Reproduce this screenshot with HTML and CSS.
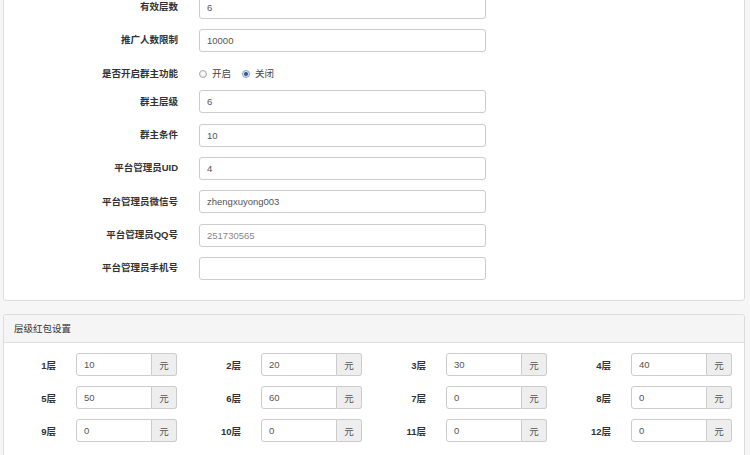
FILE: index.html
```html
<!DOCTYPE html>
<html lang="zh-CN">
<head>
<meta charset="utf-8">
<title>设置</title>
<link rel="stylesheet" href="styles.css">
</head>
<body>
<div class="page">
  <div class="panel panel-top">
    <div class="panel-body">
      <div class="form-row"><label class="lbl">有效层数</label><input class="field" type="text" value="6"></div>
      <div class="form-row"><label class="lbl">推广人数限制</label><input class="field" type="text" value="10000"></div>
      <div class="form-row radio-row">
        <label class="lbl">是否开启群主功能</label>
        <div class="radios">
          <label class="radio-inline"><input type="radio" name="qz"><span>开启</span></label>
          <label class="radio-inline"><input type="radio" name="qz" checked><span>关闭</span></label>
        </div>
      </div>
      <div class="form-row"><label class="lbl">群主层级</label><input class="field" type="text" value="6"></div>
      <div class="form-row"><label class="lbl">群主条件</label><input class="field" type="text" value="10"></div>
      <div class="form-row"><label class="lbl">平台管理员UID</label><input class="field" type="text" value="4"></div>
      <div class="form-row"><label class="lbl">平台管理员微信号</label><input class="field" type="text" value="zhengxuyong003"></div>
      <div class="form-row"><label class="lbl">平台管理员QQ号</label><input class="field light" type="text" value="251730565"></div>
      <div class="form-row"><label class="lbl">平台管理员手机号</label><input class="field" type="text" value=""></div>
    </div>
  </div>

  <div class="panel">
    <div class="panel-heading">层级红包设置</div>
    <div class="panel-body grid">
      <div class="cell"><label class="lbl-s">1层</label><div class="igroup"><input type="text" value="10"><span class="addon">元</span></div></div>
      <div class="cell"><label class="lbl-s">2层</label><div class="igroup"><input type="text" value="20"><span class="addon">元</span></div></div>
      <div class="cell"><label class="lbl-s">3层</label><div class="igroup"><input type="text" value="30"><span class="addon">元</span></div></div>
      <div class="cell"><label class="lbl-s">4层</label><div class="igroup"><input type="text" value="40"><span class="addon">元</span></div></div>
      <div class="cell"><label class="lbl-s">5层</label><div class="igroup"><input type="text" value="50"><span class="addon">元</span></div></div>
      <div class="cell"><label class="lbl-s">6层</label><div class="igroup"><input type="text" value="60"><span class="addon">元</span></div></div>
      <div class="cell"><label class="lbl-s">7层</label><div class="igroup"><input type="text" value="0"><span class="addon">元</span></div></div>
      <div class="cell"><label class="lbl-s">8层</label><div class="igroup"><input type="text" value="0"><span class="addon">元</span></div></div>
      <div class="cell"><label class="lbl-s">9层</label><div class="igroup"><input type="text" value="0"><span class="addon">元</span></div></div>
      <div class="cell"><label class="lbl-s">10层</label><div class="igroup"><input type="text" value="0"><span class="addon">元</span></div></div>
      <div class="cell"><label class="lbl-s">11层</label><div class="igroup"><input type="text" value="0"><span class="addon">元</span></div></div>
      <div class="cell"><label class="lbl-s">12层</label><div class="igroup"><input type="text" value="0"><span class="addon">元</span></div></div>
    </div>
  </div>
</div>
</body>
</html>
```
FILE: styles.css
```css
* { box-sizing: border-box; }

html, body {
  margin: 0;
  padding: 0;
  background: #f6f6f6;
  font-family: "Liberation Sans", "Noto Sans CJK SC", sans-serif;
  font-size: 9.5px;
  color: #333;
  overflow: hidden;
}

.page {
  padding: 0 5px 0 3px;
}

.panel {
  background: #fff;
  border: 1px solid #ddd;
  border-radius: 3px;
  margin-bottom: 13px;
}

.panel-top {
  margin-top: -15.5px;
}

.panel-body {
  padding: 10px 0;
}

.form-row {
  display: flex;
  align-items: center;
  height: 23px;
  margin-bottom: 10.3px;
}

.form-row:last-child {
  margin-bottom: 10.6px;
}

.lbl {
  width: 174px;
  text-align: right;
  font-weight: bold;
  margin-right: 21px;
  line-height: 12px;
}

.field {
  width: 287px;
  height: 23px;
  border: 1px solid #ccc;
  border-radius: 3px;
  padding: 0 7px;
  font-family: "Liberation Sans", "Noto Sans CJK SC", sans-serif;
  font-size: 9.5px;
  color: #555;
  background: #fff;
  outline: none;
}

.field.light { color: #888; }

.radio-row {
  height: 18px;
  align-items: flex-start;
  padding-top: 6px;
}

.radios {
  display: flex;
  align-items: center;
  line-height: 12px;
  color: #444;
}

.radio-inline {
  display: flex;
  align-items: center;
  margin-right: 11px;
}

.radio-inline input {
  -webkit-appearance: none;
  appearance: none;
  width: 8px;
  height: 8px;
  margin: 0 5px 0 0;
  border: 1px solid #a8a8a8;
  border-radius: 50%;
  background: radial-gradient(circle at 50% 40%, #fff 0, #e6e6e6 100%);
}

.radio-inline input:checked {
  background: radial-gradient(circle, #2b4f86 0, #3a66a8 1.6px, #dfe6f0 2.4px, #f4f4f4 100%);
  border-color: #8c9bb0;
}

.panel-heading {
  background: #f5f5f5;
  border-bottom: 1px solid #ddd;
  padding: 7px 10px;
  line-height: 13px;
  color: #333;
  border-radius: 3px 3px 0 0;
}

.grid {
  display: grid;
  grid-template-columns: repeat(4, 1fr);
  row-gap: 10px;
  padding: 10px 0 20px;
}

.cell {
  display: flex;
  align-items: center;
  height: 23px;
}

.lbl-s {
  width: 52px;
  text-align: right;
  font-weight: bold;
  margin-right: 20px;
}

.igroup {
  display: flex;
  width: 101px;
  height: 23px;
}

.igroup input {
  width: 76px;
  height: 23px;
  border: 1px solid #ccc;
  border-radius: 3px 0 0 3px;
  padding: 0 7px;
  font-family: "Liberation Sans", "Noto Sans CJK SC", sans-serif;
  font-size: 9.5px;
  color: #555;
  outline: none;
}

.addon {
  width: 25px;
  height: 23px;
  display: flex;
  align-items: center;
  justify-content: center;
  background: #eee;
  border: 1px solid #ccc;
  border-left: 0;
  border-radius: 0 3px 3px 0;
  color: #555;
  font-size: 9.5px;
}
```
